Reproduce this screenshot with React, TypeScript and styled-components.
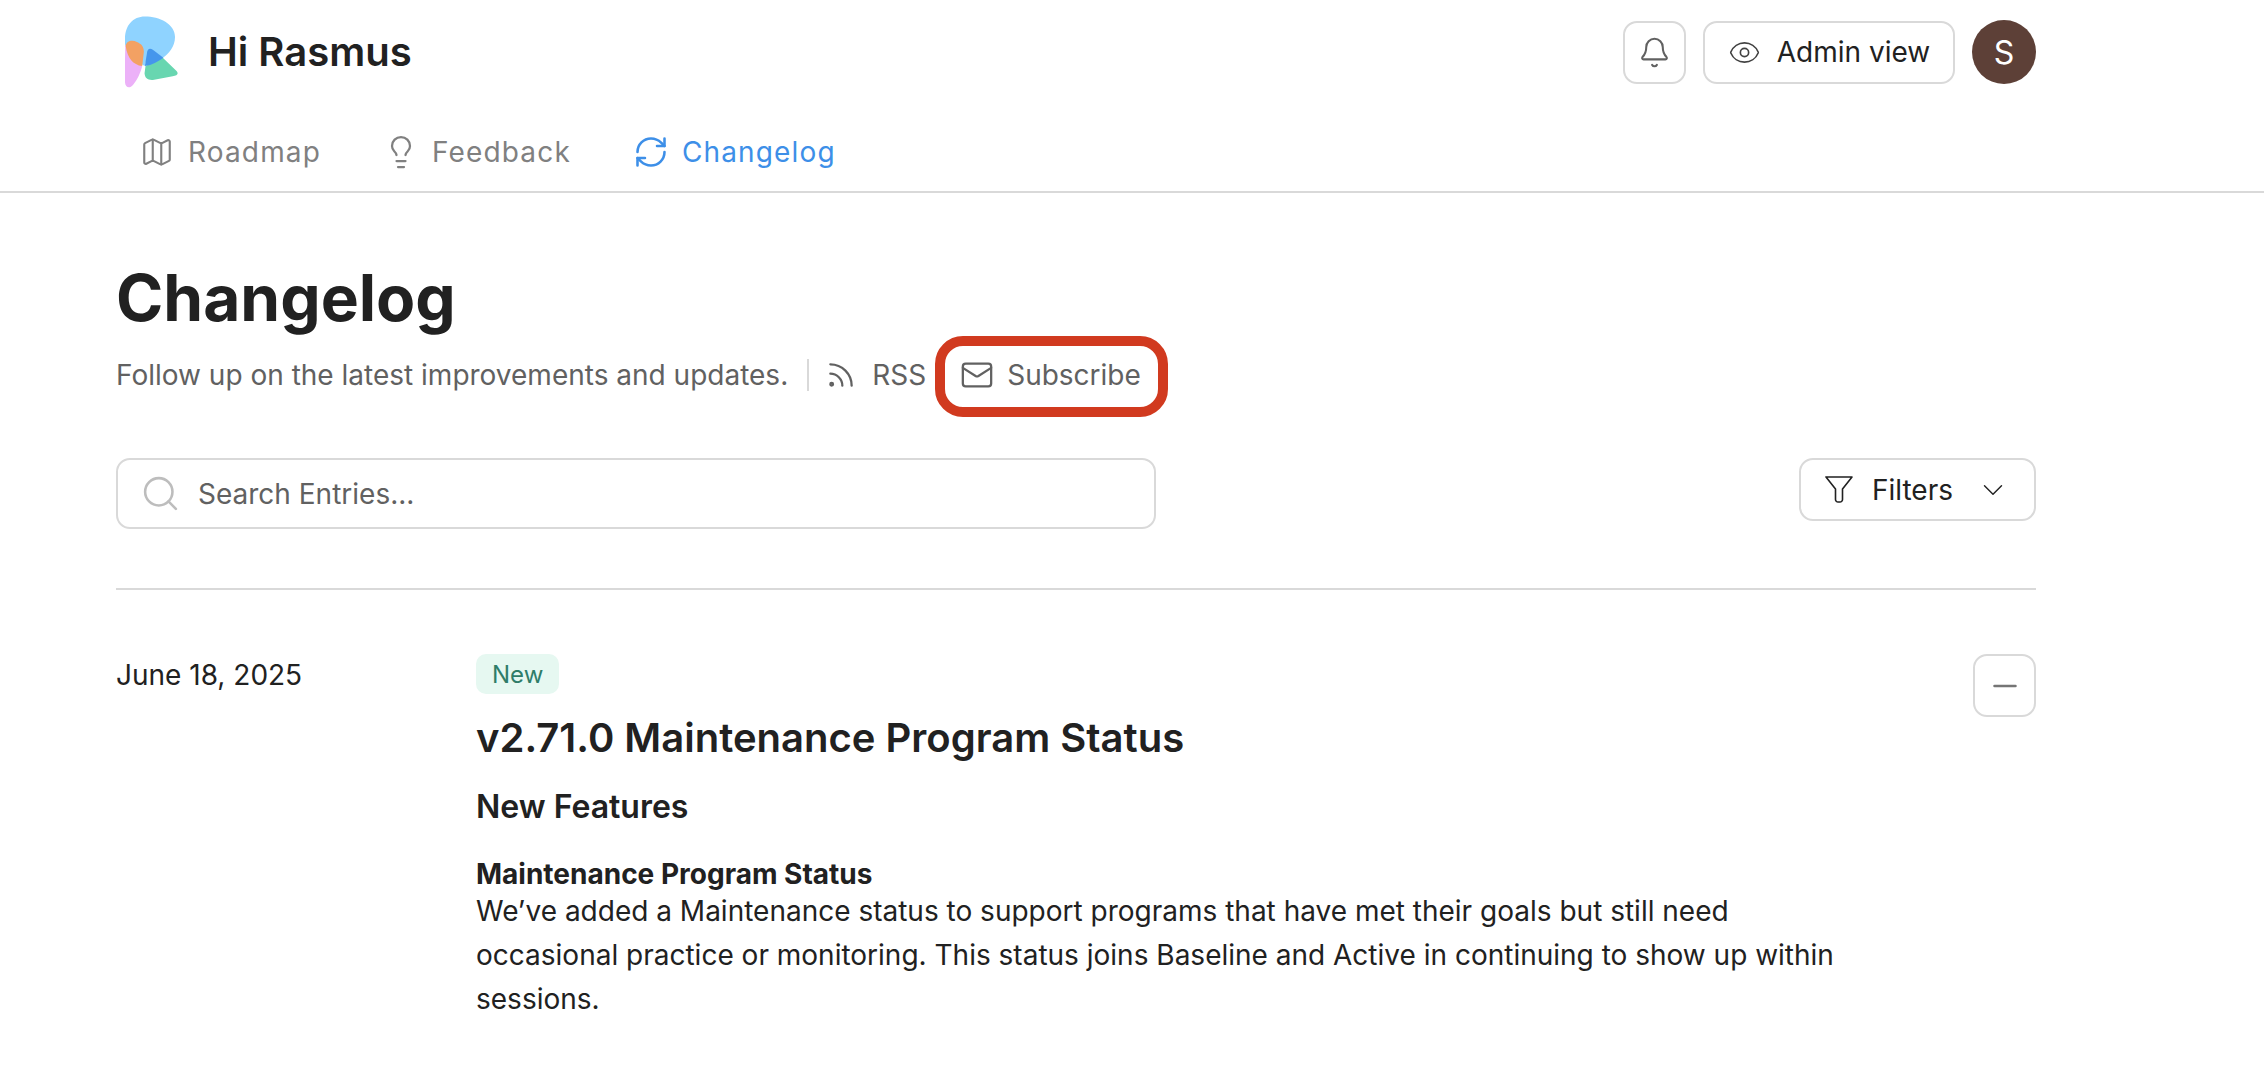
import { createGlobalStyle, styled } from 'styled-components';
import { Bell, ChevronDown, Eye, Lightbulb, Mail, Map, Minus, RefreshCw, Rss, Search } from 'lucide-react';

const GlobalStyle = createGlobalStyle`
  html, body {
    margin: 0;
    padding: 0;
    background: #fff;
    overflow: hidden;
  }
  * { box-sizing: border-box; }
  body {
    font-family: Inter, "Liberation Sans", sans-serif;
    color: #212121;
  }
`;

const Page = styled.div`
  width: 2264px;
  height: 1066px;
  overflow: hidden;
`;

const Header = styled.header`
  border-bottom: 2px solid #d9d9d9;
  height: 193px;
  padding: 0 228px 0 116px;
`;

const TopBar = styled.div`
  display: flex;
  align-items: center;
  justify-content: space-between;
  height: 104px;
`;

const Brand = styled.div`
  display: flex;
  align-items: center;
  gap: 30px;
  padding-left: 9px;
`;

const Greeting = styled.h2`
  margin: -2px 0 0;
  font-size: 40px;
  font-weight: 600;
  color: #212121;
`;

const Actions = styled.div`
  display: flex;
  align-items: center;
  gap: 17px;
`;

const OutlineButton = styled.button<{ $width: number }>`
  display: flex;
  align-items: center;
  justify-content: center;
  width: ${p => p.$width}px;
  height: 63px;
  padding: 0;
  background: #fff;
  border: 2px solid #d9d9d9;
  border-radius: 14px;
  font-family: inherit;
  font-size: 28px;
  color: #212121;
`;

const AdminLabel = styled.span`
  margin-left: 16px;
`;

const Avatar = styled.div`
  width: 64px;
  height: 64px;
  border-radius: 50%;
  background: #5d4037;
  color: #fff;
  font-size: 32px;
  display: flex;
  align-items: center;
  justify-content: center;
`;

const Tabs = styled.nav`
  display: flex;
  height: 87px;
  padding-left: 24px;
  gap: 62px;
`;

const Tab = styled.a<{ $active?: boolean; $gap: number }>`
  display: flex;
  align-items: center;
  gap: ${p => p.$gap}px;
  height: 96px;
  font-size: 28px;
  font-weight: 400;
  letter-spacing: 1.15px;
  color: ${p => (p.$active ? '#3d8fe8' : '#808080')};
`;

const Main = styled.main`
  padding: 0 228px 0 116px;
`;

const Title = styled.h1`
  margin: 0;
  padding-top: 69px;
  font-size: 64px;
  line-height: 72px;
  font-weight: 700;
  color: #212121;
`;

const SubRow = styled.div`
  display: flex;
  align-items: center;
  height: 44px;
  margin-top: 19px;
  font-size: 28px;
  color: #616161;
`;

const Divider = styled.span`
  width: 2px;
  height: 32px;
  background: #d9d9d9;
  margin: 0 16px 0 19px;
`;

const SubLink = styled.a`
  display: flex;
  align-items: center;
  gap: 15px;
`;

// the red marker round this link is an annotation lying over the page
const SubscribeLink = styled(SubLink)`
  position: relative;
  gap: 13px;
  margin-left: 34px;

  &::after {
    content: '';
    position: absolute;
    left: -25px;
    right: -27px;
    top: -22px;
    bottom: -25px;
    border: 10px solid #d13a1f;
    border-radius: 28px;
  }
`;

const FilterRow = styled.div`
  display: flex;
  align-items: flex-start;
  justify-content: space-between;
  margin-top: 61px;
`;

const SearchBox = styled.div`
  width: 1040px;
  height: 71px;
  display: flex;
  align-items: center;
  gap: 17px;
  padding-left: 22px;
  border: 2px solid #d9d9d9;
  border-radius: 14px;
  font-size: 28px;
  color: #616161;
`;

const FiltersLabel = styled.span`
  margin: 0 23px 0 19px;
`;

const Rule = styled.hr`
  margin: 59px 0 0;
  border: 0;
  border-top: 2px solid #d9d9d9;
`;

const Entry = styled.article`
  display: flex;
  padding-top: 64px;
`;

const EntryDate = styled.div`
  width: 360px;
  flex: none;
  padding-top: 1px;
  font-size: 28px;
  line-height: 40px;
  color: #212121;
`;

const EntryBody = styled.div`
  flex: 1;
  max-width: 1400px;
`;

const Badge = styled.span`
  display: flex;
  align-items: center;
  width: fit-content;
  height: 40px;
  padding: 0 16px;
  border-radius: 10px;
  background: #e6f8f1;
  color: #2f7d69;
  font-size: 24px;
`;

const EntryTitle = styled.h2`
  margin: 20px 0 0;
  font-size: 40px;
  line-height: 48px;
  font-weight: 600;
`;

const SectionTitle = styled.h3`
  margin: 21px 0 0;
  font-size: 32px;
  line-height: 48px;
  font-weight: 600;
`;

const ItemTitle = styled.h4`
  margin: 28px 0 0;
  font-size: 28px;
  line-height: 30px;
  font-weight: 700;
`;

const Paragraph = styled.p`
  margin: 0;
  font-size: 28px;
  line-height: 44px;
  color: #212121;
`;

const CollapseCell = styled.div`
  margin-left: auto;
`;

// Logo regions are drawn opaque, the overlaps get their own colour
function Logo() {
  return (
    <svg width="53" height="73" viewBox="46 33 160 218" aria-hidden="true">
      <path fill="#8fd3ff" d="M46 100C46 60 70 33 106 33C150 33 197 55 197 95C197 125 178 145 160 158L122 132L105 183L70 160L46 118Z" />
      <path fill="#ecb1f8" d="M47 118C46 160 45 200 46 232C47 248 60 252 70 240C85 222 92 205 98 183L75 165Z" />
      <path fill="#f3a163" d="M48 122C50 108 66 102 82 110C96 116 103 124 103 140L98 183C70 178 54 160 48 122Z" />
      <path fill="#68d6b0" d="M108 183L160 158L200 196C210 206 204 212 190 214L130 225C115 226 106 220 105 205Z" />
      <path fill="#4596ec" d="M113 140C115 130 122 128 130 134L162 158C145 170 128 180 106 183Z" />
    </svg>
  );
}

function FunnelIcon() {
  return (
    <svg width="28" height="27" viewBox="0 0 28 27" fill="none" stroke="#212121" strokeWidth="1.6" strokeLinejoin="round" aria-hidden="true">
      <path d="M1 1H27L17.5 13V23.5a2.5 2.5 0 0 1-2.5 2.5h-2a2.5 2.5 0 0 1-2.5-2.5V13Z" />
    </svg>
  );
}

export default function App() {
  return (
    <Page>
      <GlobalStyle />
      <Header>
        <TopBar>
          <Brand>
            <Logo />
            <Greeting>Hi Rasmus</Greeting>
          </Brand>
          <Actions>
            <OutlineButton $width={63}>
              <Bell size={33} strokeWidth={1.5} color="#616161" />
            </OutlineButton>
            <OutlineButton $width={252}>
              <Eye size={33} strokeWidth={1.2} color="#424242" />
              <AdminLabel>Admin view</AdminLabel>
            </OutlineButton>
            <Avatar>S</Avatar>
          </Actions>
        </TopBar>
        <Tabs>
          <Tab $gap={14}>
            <Map size={34} strokeWidth={1.5} />
            Roadmap
          </Tab>
          <Tab $gap={13}>
            <Lightbulb size={36} strokeWidth={1.5} />
            Feedback
          </Tab>
          <Tab $active $gap={13}>
            <RefreshCw size={36} strokeWidth={1.7} />
            Changelog
          </Tab>
        </Tabs>
      </Header>
      <Main>
        <Title>Changelog</Title>
        <SubRow>
          Follow up on the latest improvements and updates.
          <Divider />
          <SubLink>
            <Rss size={32} strokeWidth={1.7} />
            RSS
          </SubLink>
          <SubscribeLink>
            <Mail size={34} strokeWidth={1.6} />
            Subscribe
          </SubscribeLink>
        </SubRow>
        <FilterRow>
          <SearchBox>
            <Search size={41} strokeWidth={1.5} color="#bdbdbd" />
            Search Entries...
          </SearchBox>
          <OutlineButton $width={237}>
            <FunnelIcon />
            <FiltersLabel>Filters</FiltersLabel>
            <ChevronDown size={34} strokeWidth={1} />
          </OutlineButton>
        </FilterRow>
        <Rule />
        <Entry>
          <EntryDate>June 18, 2025</EntryDate>
          <EntryBody>
            <Badge>New</Badge>
            <EntryTitle>v2.71.0 Maintenance Program Status</EntryTitle>
            <SectionTitle>New Features</SectionTitle>
            <ItemTitle>Maintenance Program Status</ItemTitle>
            <Paragraph>
              We’ve added a Maintenance status to support programs that have met their goals but still need occasional
              practice or monitoring. This status joins Baseline and Active in continuing to show up within sessions.
            </Paragraph>
          </EntryBody>
          <CollapseCell>
            <OutlineButton $width={63}>
              <Minus size={36} strokeWidth={1.7} color="#757575" />
            </OutlineButton>
          </CollapseCell>
        </Entry>
      </Main>
    </Page>
  );
}
